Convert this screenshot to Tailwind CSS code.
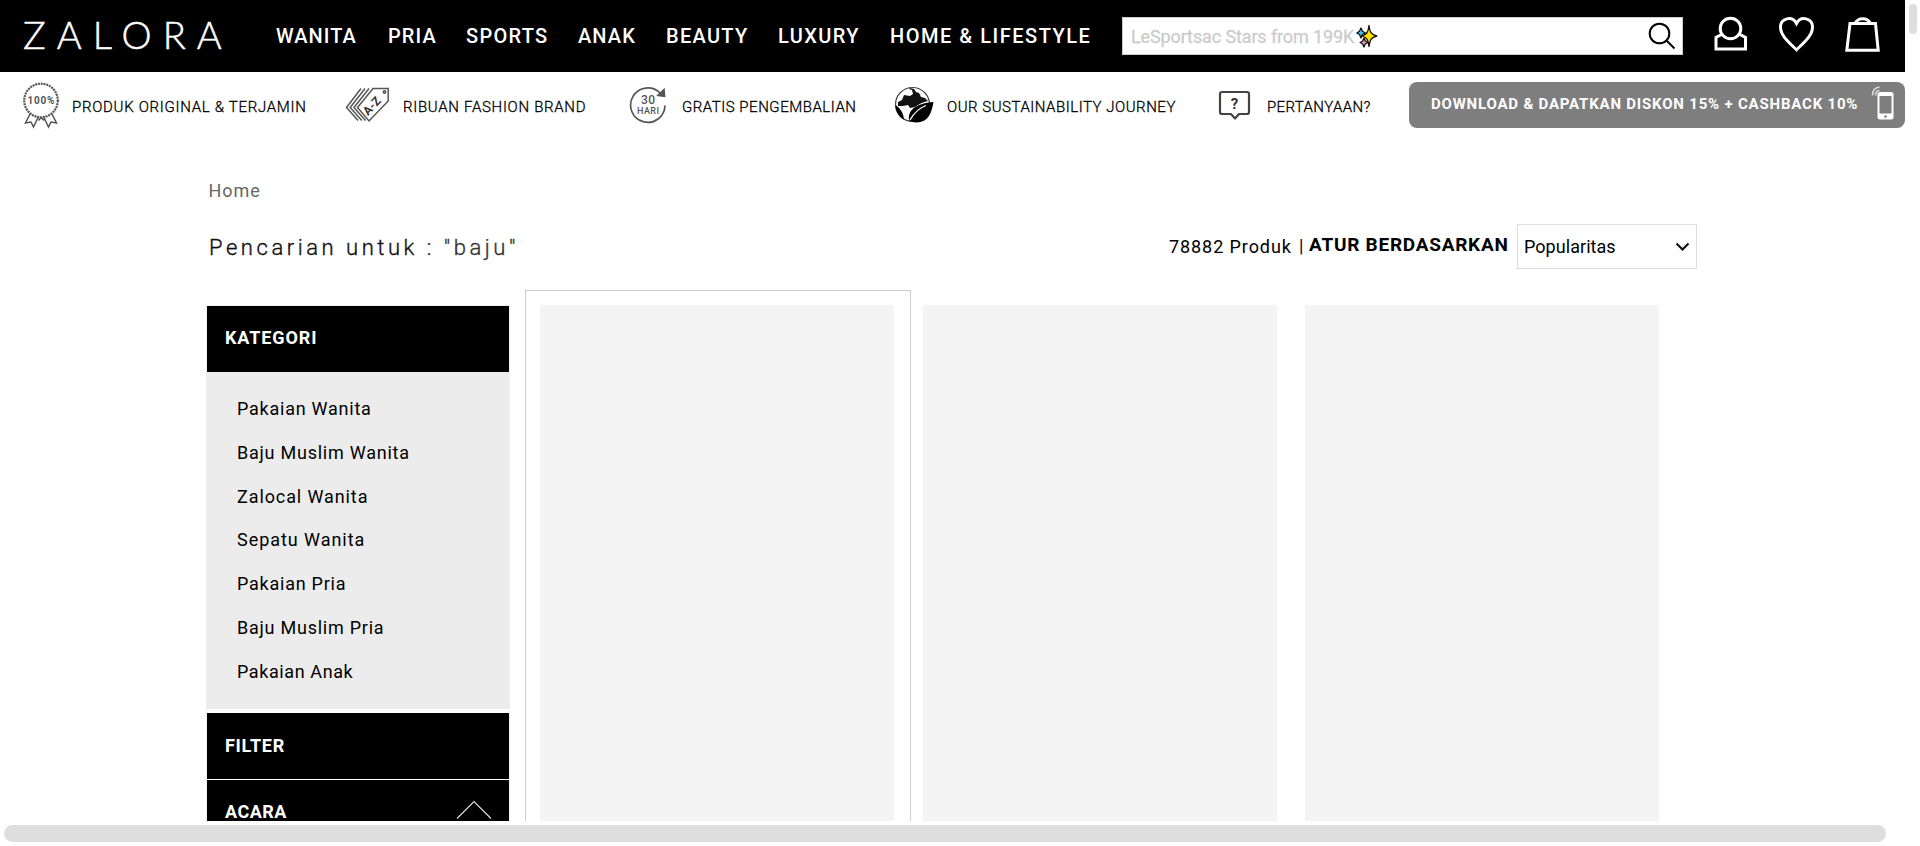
<!DOCTYPE html>
<html lang="id">
<head>
<meta charset="utf-8">
<title>ZALORA</title>
<script src="https://cdn.jsdelivr.net/npm/@tailwindcss/browser@4"></script>
</head>
<body class="flex h-[846px] w-[1920px] flex-col overflow-hidden bg-white font-[Roboto,sans-serif] text-black">
<div class="flex h-[821px] w-full overflow-hidden">
<div class="h-full w-[1905px] shrink-0 overflow-hidden">

  <header class="flex h-[72px] items-start bg-black text-white">
    <a class="w-[253px] shrink-0 pl-[23px] font-[Lato,sans-serif] text-[38px] leading-[69px] font-light tracking-[11.1px] whitespace-nowrap [-webkit-text-stroke:0.5px_#fff]">ZALORA</a>
    <nav class="flex w-[869px] shrink-0 pl-[23px] text-[20px] leading-[73px] font-medium whitespace-nowrap">
      <a class="w-[112px] tracking-[1.05px]">WANITA</a>
      <a class="w-[78px] tracking-[1.1px]">PRIA</a>
      <a class="w-[112px] tracking-[1.3px]">SPORTS</a>
      <a class="w-[88px] tracking-[1.1px]">ANAK</a>
      <a class="w-[112px] tracking-[1.3px]">BEAUTY</a>
      <a class="w-[112px] tracking-[1.4px]">LUXURY</a>
      <a class="w-[220px] tracking-[1.52px]">HOME &amp; LIFESTYLE</a>
    </nav>
    <div class="mt-[17px] flex h-[38px] w-[561px] shrink-0 items-center border border-[#ccc] bg-white pl-[8px] text-[18px] text-[#ccc]">
      <span class="w-[225px] whitespace-nowrap tracking-[-0.12px] [-webkit-text-stroke:0.3px_#ccc]">LeSportsac Stars from 199K</span>
      <svg class="h-[24px] w-[22px]" viewBox="0 0 22 24" stroke="#111" stroke-width="1.3" stroke-linejoin="round">
        <path fill="#40c8f4" d="M5 4l1.4 3.2L9.5 9 6.4 10.500 5 14 3.500 10.500.8 9l2.700-1.800z"/>
        <path fill="#f49ac8" d="M8 14l1.300 3 2.500 1.500-2.500 1.500L8 23l-1.300-3-2.500-1.500L6.700 17z"/>
        <path fill="#ffe000" d="M13 1.500c.8 6.500 2 9 7.800 10.500-5.800 1.500-7 4-7.800 10.500-.8-6.500-2-9-7-10.500 5-1.500 6.200-4 7-10.500z"/>
      </svg>
      <svg class="mr-[6px] ml-auto h-[28px] w-[28px]" viewBox="0 0 28 28" fill="none" stroke="#000" stroke-width="2"><circle cx="11.500" cy="11.500" r="9.800"/><path d="M18.500 18.500l8 8"/></svg>
    </div>
    <div class="mt-[16px] ml-[30px] flex shrink-0 gap-[29px]">
      <svg class="h-[38px] w-[36px]" viewBox="0 0 36 38" fill="none" stroke="#fff" stroke-width="3"><circle cx="17.500" cy="12.500" r="10.300"/><path d="M8.500 18.500l-5.500 3v11.500h29.500v-11.500l-5.500-3"/></svg>
      <svg class="h-[38px] w-[38px]" viewBox="0 0 38 38" fill="none" stroke="#fff" stroke-width="3" stroke-linejoin="miter"><path d="M18.500 33.800C10.500 26 2.500 19.500 2.500 11.300 2.500 2 14.300-.6 18.500 7.500 22.700-.6 34.500 2 34.500 11.300c0 8.200-8 14.700-16 22.500z"/></svg>
      <svg class="h-[38px] w-[38px]" viewBox="0 0 38 38" fill="none" stroke="#fff" stroke-width="3"><path d="M5 7.500h25.500l2.700 26.800H1.800z"/><path d="M10 7.500c3-6.500 12.500-6.500 15.500 0"/></svg>
    </div>
  </header>

  <div class="flex h-[66px] items-start text-[15px] leading-[70px] font-light whitespace-nowrap">
    <svg class="mt-[9px] ml-[22px] h-[48px] w-[38px] shrink-0" viewBox="0 0 38 48" fill="none" stroke="#555" stroke-width="1.500">
      <circle cx="19" cy="19.500" r="16.800" stroke-width="2.200" stroke-dasharray="2 .8"/>
      <path d="M8 33L3.500 42l5.500-1 2.500 5 5-10.500M30 33l4.500 9-5.500-1-2.500 5-5-10.500M19 36.500l-2.500 3M19 36.500l3 3"/>
      <text x="19" y="23" text-anchor="middle" font-size="10" font-weight="700" font-family="Roboto" fill="#555" stroke="none" textLength="27">100%</text>
    </svg>
    <span class="ml-[12px] w-[273px] tracking-[0.71px] [-webkit-text-stroke:0.3px_#000]">PRODUK ORIGINAL &amp; TERJAMIN</span>
    <svg class="mt-[15px] h-[38px] w-[46px] shrink-0" viewBox="0 0 46 38" fill="none" stroke="#555" stroke-width="1.500">
      <path d="M24 1.500L9 20.500l11.500 13M20 1.500L5.200 20.500l11.500 13M16 1.500L1.500 20.500l11.500 13"/>
      <path fill="#fff" d="M12.500 20.500L28 1.500h15.200V14L24 34z"/><circle cx="39.500" cy="5" r="1.200"/>
      <text x="27" y="23" transform="rotate(-47 27 19)" text-anchor="middle" font-size="12" font-weight="700" font-family="Roboto" fill="#333" stroke="none">A-Z</text>
    </svg>
    <span class="ml-[12px] w-[226px] tracking-[0.7px] [-webkit-text-stroke:0.3px_#000]">RIBUAN FASHION BRAND</span>
    <svg class="mt-[14px] h-[38px] w-[40px] shrink-0" viewBox="0 0 40 38" fill="none" stroke="#555" stroke-width="1.700">
      <path d="M36 19.500a17.200 17.200 0 1 1-5-12.500"/><path fill="#555" d="M35 3.500l.5 6.800-6.500-1z"/>
      <text x="19" y="17.500" text-anchor="middle" font-size="12" font-weight="500" font-family="Roboto" fill="#555" stroke="none" textLength="14">30</text>
      <text x="19" y="28" text-anchor="middle" font-size="9" font-weight="500" font-family="Roboto" fill="#555" stroke="none" textLength="22">HARI</text>
    </svg>
    <span class="ml-[13px] w-[212px] tracking-[0.52px] [-webkit-text-stroke:0.3px_#000]">GRATIS PENGEMBALIAN</span>
    <svg class="mt-[14px] h-[38px] w-[40px] shrink-0" viewBox="0 0 40 38">
      <circle cx="18.500" cy="18.500" r="17" fill="#fff" stroke="#444" stroke-width="1.200"/>
      <path fill="#111" d="M4 16l4-2 2-5 6 1 3-2-1-4-3-1 1-1 4 1 2 3 3 1 2 4 4 1 3 3c-5 1-9 3-13 6l-5 1-2-3-5 1-5 0z"/>
      <path fill="#000" d="M39.500 16c-2 11-5 20-17 20.500-3 0-6-1-7.500-2C13 22 26 17 39.500 16z"/>
      <path fill="#000" d="M1.500 19c5 3 8 9 8.500 14.500C5 31 1.500 25 1.500 19z"/>
      <path fill="none" stroke="#fff" stroke-width="1.300" d="M16 34c4-7 9-12 16-14.500"/>
    </svg>
    <span class="ml-[13px] w-[271px] tracking-[0.52px] [-webkit-text-stroke:0.3px_#000]">OUR SUSTAINABILITY JOURNEY</span>
    <svg class="mt-[17px] h-[33px] w-[34px] shrink-0" viewBox="0 0 34 33" fill="none" stroke="#444" stroke-width="2.200" stroke-linejoin="round">
      <path d="M4 3h25q2 0 2 2v18q0 2-2 2h-8l-4 4.500-4-4.500H4q-2 0-2-2V5q0-2 2-2z"/>
      <text x="16.500" y="19.500" text-anchor="middle" font-size="15" font-weight="700" font-family="Roboto" fill="#333" stroke="none">?</text>
    </svg>
    <span class="ml-[15px] w-[142px] tracking-[0.38px] [-webkit-text-stroke:0.3px_#000]">PERTANYAAN?</span>
    <a class="mt-[10px] flex h-[46px] w-[496px] shrink-0 rounded-[8px] bg-[#7e7e7e] pl-[22px] text-[15px] leading-[44px] font-bold text-white">
      <span class="w-[440px] tracking-[0.8px]">DOWNLOAD &amp; DAPATKAN DISKON 15% + CASHBACK 10%</span>
      <svg class="mt-[3px] h-[36px] w-[24px]" viewBox="0 0 24 36"><rect x="6.500" y="7" width="16" height="27.500" rx="2.500" fill="#fff"/><rect x="8.500" y="11" width="12" height="17.500" fill="#7e7e7e"/><circle cx="14.500" cy="31.500" r="1.300" fill="#7e7e7e"/><path d="M1.500 10.500C1.500 5.500 4 2.500 8.500 2M4.500 10.500c0-3 1.200-4.800 4-5" fill="none" stroke="#ddd" stroke-width="1.500"/></svg>
    </a>
  </div>

  <main class="pl-[206px]">
    <div class="mt-[40px] h-[25px] pl-[2.500px] text-[18px] leading-[25px] tracking-[0.95px] text-[#666]">Home</div>
    <div class="mt-[21px] flex h-[45px] whitespace-nowrap">
      <h1 class="w-[963px] pl-[3px] text-[22px] leading-[47px] font-light tracking-[3.54px] text-[#111] [-webkit-text-stroke:0.35px_currentColor]">Pencarian untuk : <span class="text-[#333]">"baju"</span></h1>
      <span class="w-[130px] text-[18px] leading-[45px] tracking-[0.92px]">78882 Produk</span>
      <span class="w-[10px] text-[18px] leading-[44px]">|</span>
      <span class="w-[208px] text-[19px] leading-[42px] font-bold tracking-[0.75px]">ATUR BERDASARKAN</span>
      <div class="flex w-[180px] items-center justify-between border border-[#ddd] pr-[6px] pl-[6px] text-[18px] tracking-[0.05px]">Popularitas
        <svg class="h-[10px] w-[15px]" viewBox="0 0 15 10" fill="none" stroke="#111" stroke-width="2.200"><path d="M1.500 1.500l6 6 6-6"/></svg>
      </div>
    </div>
    <div class="mt-[21px] flex">
      <aside class="mt-[15px] w-[304px] shrink-0 border border-[#f0f0f0] text-[18px]">
        <h2 class="h-[66px] bg-black pl-[18px] leading-[63px] font-bold tracking-[0.9px] text-white">KATEGORI</h2>
        <ul class="h-[337px] bg-[#ececec] pt-[15px] pl-[30px] leading-[43.8px] tracking-[0.76px]">
          <li>Pakaian Wanita</li><li>Baju Muslim Wanita</li><li class="tracking-[0.9px]">Zalocal Wanita</li><li class="tracking-[0.95px]">Sepatu Wanita</li><li>Pakaian Pria</li><li>Baju Muslim Pria</li><li class="tracking-[0.6px]">Pakaian Anak</li>
        </ul>
        <h2 class="mt-[4px] h-[66px] bg-black pl-[18px] leading-[65px] font-bold tracking-[0.7px] text-white">FILTER</h2>
        <h2 class="mt-px flex h-[66px] justify-between bg-black pr-[17px] pl-[18px] leading-[63px] font-bold tracking-[0.5px] text-white">ACARA
          <svg class="mt-[20px] h-[20px] w-[36px]" viewBox="0 0 36 20" fill="none" stroke="#ddd" stroke-width="1.200"><path d="M1 18.500l17-17 17 17"/></svg>
        </h2>
      </aside>
      <section class="ml-[15px] flex h-[540px]">
        <div class="w-[386px] border border-[#ccc] px-[14px] pt-[14px]"><div class="h-[540px] w-[354px] bg-[#f4f4f4]"></div></div>
        <div class="mt-[15px] ml-[12px] h-[540px] w-[354px] bg-[#f4f4f4]"></div>
        <div class="mt-[15px] ml-[28px] h-[540px] w-[354px] bg-[#f4f4f4]"></div>
      </section>
    </div>
  </main>
</div>
<div class="w-[15px] pt-[4px] pl-[4px]"><div class="h-[30px] w-[8px] rounded-full bg-[#dedede]"></div></div>
</div>
<div class="mt-[4px] ml-[4px] h-[17px] w-[1882px] rounded-full bg-[#dedede]"></div>
</body>
</html>
